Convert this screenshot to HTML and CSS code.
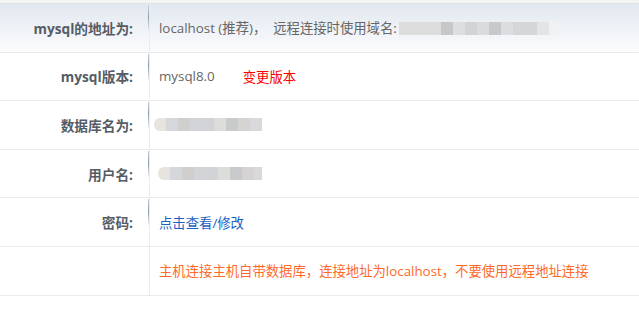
FILE: index.html
```html
<!DOCTYPE html>
<html lang="zh">
<head>
<meta charset="utf-8">
<link rel="stylesheet" href="styles.css">
</head>
<body>
<div class="topstrip"></div>
<div class="table">
  <div class="row head">
    <div class="label">mysql的地址为:</div>
    <div class="value">localhost (推荐)，&nbsp; 远程连接时使用域名:<span class="blur blur-domain"></span></div>
  </div>
  <div class="row">
    <div class="label">mysql版本:</div>
    <div class="value">mysql8.0<a class="change">变更版本</a></div>
  </div>
  <div class="row">
    <div class="label">数据库名为:</div>
    <div class="value"><span class="blur blur-name first"></span></div>
  </div>
  <div class="row">
    <div class="label">用户名:</div>
    <div class="value"><span class="blur blur-name second"></span></div>
  </div>
  <div class="row">
    <div class="label">密码:</div>
    <div class="value"><a class="link">点击查看/修改</a></div>
  </div>
  <div class="row">
    <div class="label"></div>
    <div class="value notice">主机连接主机自带数据库，连接地址为localhost，不要使用远程地址连接</div>
  </div>
</div>
</body>
</html>
```
FILE: styles.css
```css
html, body {
  margin: 0;
  padding: 0;
  background: #fff;
}
body {
  font-family: "Open Sans", "Noto Sans CJK SC", sans-serif;
  font-size: 13.35px;
  color: #666;
}
.topstrip {
  height: 3px;
  background: #f4f4f4;
}
.table {
  border-top: 1px solid #e3e3e3;
  width: 639px;
}
.row {
  display: flex;
  height: 47.6px;
  border-bottom: 1px solid #ebebeb;
}
.row.head {
  background: linear-gradient(to bottom, #e2e8f0, #fbfcfd);
}
.label {
  position: relative;
  width: 149px;
  flex: none;
  box-sizing: border-box;
  padding-right: 16px;
  display: flex;
  align-items: center;
  justify-content: flex-end;
  font-weight: bold;
  font-size: 13.7px;
  color: #555c66;
}
.label::after {
  content: "";
  position: absolute;
  right: 0;
  top: 1px;
  width: 1px;
  height: 26px;
  background: linear-gradient(to bottom, #cdd4dd, #8d9cac 45%, #e8ecf0);
}
.row:last-child .label::after {
  display: none;
}
.value {
  flex: 1;
  border-left: 1px solid #ececec;
  padding-left: 9px;
  display: flex;
  align-items: center;
  white-space: nowrap;
}
.change {
  color: #ff0000;
  margin-left: 28px;
}
.link {
  color: #1a5fc8;
}
.notice {
  color: #ff6a2a;
}
.blur {
  display: inline-block;
  height: 13px;
}
.blur-domain {
  width: 160px;
  margin-left: 2px;
  margin-top: 2px;
  background: linear-gradient(to right,
    #dcdcdc 0, #dcdcdc 42px,
    #c6c7c9 42px, #c6c7c9 54px,
    #dddee0 54px, #dddee0 66px,
    #d2d3d5 66px, #d2d3d5 78px,
    #dadbdd 78px, #dadbdd 90px,
    #c7c8ca 90px, #c7c8ca 102px,
    #dcdde0 102px, #dcdde0 114px,
    #d5d6d8 114px, #d5d6d8 138px,
    #e3e4e7 138px, #e3e4e7 150px,
    #f0f1f3 150px, #f0f1f3 160px);
}
.blur-name {
  width: 108px;
  margin-left: -5px;
  border-radius: 6px 0 0 6px;
  background: linear-gradient(to right,
    #e7e4df 0, #e7e4df 12px,
    #d6d7db 12px, #d6d7db 24px,
    #d0cfce 24px, #d0cfce 36px,
    #d3d4d8 36px, #d3d4d8 48px,
    #d2d3d6 48px, #d2d3d6 60px,
    #dcdcda 60px, #dcdcda 72px,
    #c9cacc 72px, #c9cacc 84px,
    #d6d4d2 84px, #d6d4d2 96px,
    #d9d9db 96px, #d9d9db 108px);
}
.blur-name.second {
  margin-left: -1px;
  width: 104px;
}
```
